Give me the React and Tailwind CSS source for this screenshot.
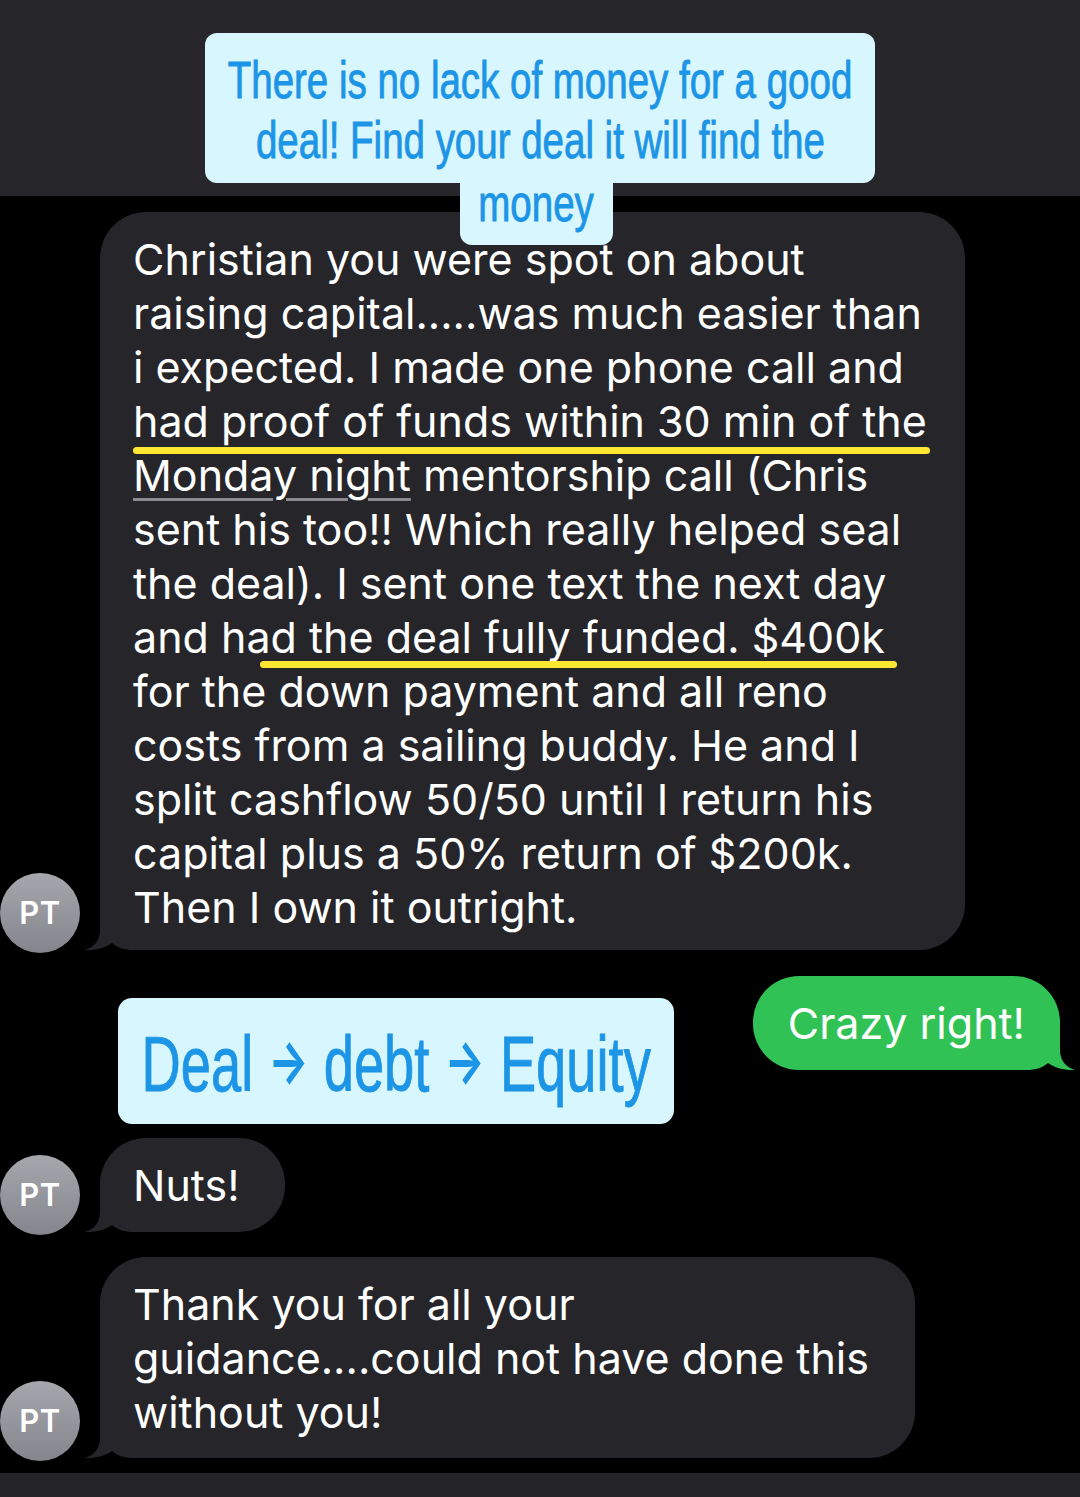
import React from 'react';

const body = "font-['Inter','Liberation_Sans',sans-serif]";
const cond = "font-['Liberation_Sans','Arial',sans-serif] [-webkit-text-stroke:0.9px_#1d95e6]";

const story = [
  'Christian you were spot on about',
  'raising capital.....was much easier than',
  'i expected. I made one phone call and',
  'had proof of funds within 30 min of the',
  null,
  'sent his too!! Which really helped seal',
  'the deal). I sent one text the next day',
  'and had the deal fully funded. $400k',
  'for the down payment and all reno',
  'costs from a sailing buddy. He and I',
  'split cashflow 50/50 until I return his',
  'capital plus a 50% return of $200k.',
  'Then I own it outright.',
];

function Avatar() {
  return (
    <div className="w-[80px] h-[80px] shrink-0 mr-[20px] mb-[-3px] rounded-full bg-gradient-to-b from-[#a6a6ad] to-[#85858d] flex items-center justify-center">
      <span className={`${body} text-white text-[31px] font-semibold tracking-[0.5px]`}>PT</span>
    </div>
  );
}

function LeftTail() {
  return (
    <svg className="absolute left-[-15px] bottom-0" width="62" height="46" viewBox="0 0 62 46">
      <path d="M15 0 L15 26 C15 37 9 43 0 46 C10 46.5 20 44 27 39 C33 44 40 46 48 46 L62 46 L62 0 Z" fill="#26252a" />
    </svg>
  );
}

function RightTail() {
  return (
    <svg className="absolute right-[-15px] bottom-0" width="62" height="46" viewBox="0 0 62 46">
      <path d="M47 0 L47 26 C47 37 53 43 62 46 C52 46.5 42 44 35 39 C29 44 22 46 14 46 L0 46 L0 0 Z" fill="#31c255" />
    </svg>
  );
}

function Received({ children, className }) {
  return (
    <div className={`relative bg-[#26252a] rounded-[46px] px-[33px] text-white text-[43px] leading-[54px] ${body} ${className}`}>
      <LeftTail />
      <div className="relative whitespace-nowrap">{children}</div>
    </div>
  );
}

function Arrow() {
  return (
    <span className="font-['Inter',sans-serif] font-bold text-[60px] align-[8px] [-webkit-text-stroke:0px]">→</span>
  );
}

export default function App() {
  return (
    <div className="w-[1080px] h-[1497px] bg-black flex flex-col overflow-hidden">
      <div className="h-[196px] shrink-0 bg-[#27262b] flex justify-center pt-[33px] relative z-10">
        <div className="relative w-[670px] h-[150px] rounded-[12px] bg-[#d7f6fe] pt-[17px] text-[#1d95e6]">
          <div className={`${cond} text-[52px] leading-[60px] flex flex-col items-center`}>
            <div className="whitespace-nowrap scale-x-[0.74]">There is no lack of money for a good</div>
            <div className="whitespace-nowrap scale-x-[0.74]">deal! Find your deal it will find the</div>
          </div>
          <div className={`absolute left-[255px] top-[150px] w-[153px] h-[62px] rounded-b-[12px] bg-[#d7f6fe] flex justify-center ${cond} text-[52px] leading-[40px]`}>
            <div className="whitespace-nowrap scale-x-[0.74]">money</div>
          </div>
        </div>
      </div>

      <div className="flex items-end mt-[16px]">
        <Avatar />
        <Received className="w-[865px] pt-[20px] pb-[16px]">
          {story.map((line, i) =>
            line === null ? (
              <div key={i}>
                <span className="underline decoration-[#8a8a90] decoration-[3px] underline-offset-[7px]">Monday night</span> mentorship call (Chris
              </div>
            ) : (
              <div key={i}>{line}</div>
            )
          )}
          <div className="absolute left-0 top-[215px] w-[797px] h-[7px] rounded-full bg-[#fde733]" />
          <div className="absolute left-[127px] top-[429px] w-[637px] h-[7px] rounded-full bg-[#fde733]" />
        </Received>
      </div>

      <div className="flex items-start mt-[26px]">
        <div className="ml-[118px] mt-[22px] w-[556px] h-[126px] rounded-[14px] bg-[#d7f6fe] flex justify-center text-[#1d95e6]">
          <div className={`${cond} text-[77px] leading-[126px] whitespace-nowrap scale-x-[0.705]`}>
            Deal <Arrow /> debt <Arrow /> Equity
          </div>
        </div>
        <div className={`relative ml-auto mr-[20px] bg-[#31c255] rounded-[46px] px-[35px] py-[20px] text-white text-[43px] leading-[54px] ${body}`}>
          <RightTail />
          <div className="relative whitespace-nowrap">Crazy right!</div>
        </div>
      </div>

      <div className="flex items-end mt-[14px]">
        <Avatar />
        <Received className="w-[185px] py-[20px]">Nuts!</Received>
      </div>

      <div className="flex items-end mt-[25px]">
        <Avatar />
        <Received className="w-[815px] pt-[20px] pb-[19px]">
          <div>Thank you for all your</div>
          <div>guidance....could not have done this</div>
          <div>without you!</div>
        </Received>
      </div>

      <div className="flex-1" />
      <div className="h-[24px] shrink-0 bg-[#252429]" />
    </div>
  );
}
